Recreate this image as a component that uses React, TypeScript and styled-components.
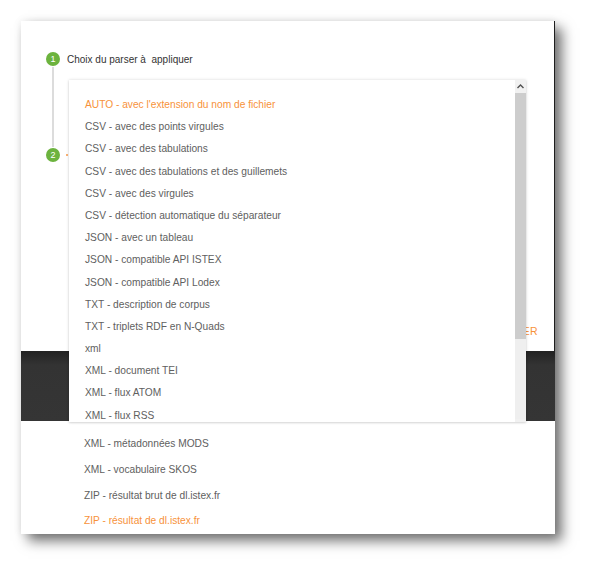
import React from "react";
import styled, { createGlobalStyle } from "styled-components";

const Global = createGlobalStyle`
  html, body { margin: 0; padding: 0; background: #fff; }
  body { font-family: "Liberation Sans", Arial, sans-serif; }
`;

const Page = styled.div`
  width: 597px;
  height: 576px;
  padding: 21px 0 0 21px;
  box-sizing: border-box;
`;

const Frame = styled.div`
  position: relative;
  width: 534px;
  height: 513px;
  background: #fff;
  display: flex;
  flex-direction: column;
  box-shadow: 7px 7px 12px rgba(0, 0, 0, 0.55), 0 0 8px rgba(0, 0, 0, 0.08);
`;

const Dialog = styled.div`
  position: relative;
  height: 331px;
  border-right: 1px solid #1e1e1e;
  box-sizing: border-box;
  padding: 31px 0 0 25px;
`;

const Step = styled.div`
  display: flex;
  align-items: center;
  gap: 7px;
  height: 14px;
`;

const Circle = styled.div`
  width: 14px;
  height: 14px;
  border-radius: 50%;
  background: #6cb33e;
  color: #fff;
  font-size: 9px;
  line-height: 14px;
  text-align: center;
  flex: none;
`;

const StepLabel = styled.span`
  font-size: 10px;
  color: #333;
`;

const ActiveMark = styled.span`
  width: 2px;
  height: 2px;
  margin-left: -1px;
  background: #f7923a;
  opacity: 0.7;
`;

const Connector = styled.div`
  width: 2px;
  height: 80px;
  margin: 1px 0 1px 6px;
  background: #dcdcdc;
`;

const Actions = styled.div`
  position: absolute;
  right: 16px;
  bottom: 14px;
  font-size: 10.5px;
  color: #f7923a;
  letter-spacing: 0.3px;
`;

const Band = styled.div`
  height: 70px;
  background: linear-gradient(#222 0, #333 14px, #353535 100%);
`;

const Lower = styled.div`
  flex: 1;
  padding: 10px 0 0 63px;
`;

const Item = styled.div<{ $active?: boolean }>`
  height: 22.2px;
  line-height: 22.2px;
  font-size: 10.2px;
  white-space: nowrap;
  color: ${(p) => (p.$active ? "#f7923a" : "#606060")};
`;

const LowerItem = styled(Item)`
  height: 25.7px;
  line-height: 25.7px;
`;

const Menu = styled.div`
  position: absolute;
  left: 48px;
  top: 59px;
  width: 457px;
  height: 342px;
  background: #fff;
  box-shadow: 0 0 3px rgba(0, 0, 0, 0.15), 0 1px 2px rgba(0, 0, 0, 0.1);
  display: flex;
  align-items: flex-start;
  overflow: hidden;
`;

const MenuList = styled.div`
  flex: 1;
  padding: 14px 0 0 16px;
`;

const Scrollbar = styled.div`
  width: 11px;
  height: 352px;
  flex: none;
  display: flex;
  flex-direction: column;
  background: #efefef;
`;

const ScrollBtn = styled.div`
  height: 13px;
  flex: none;
  display: flex;
  align-items: center;
  justify-content: center;
  background: #f1f1f1;
`;

const Thumb = styled.div`
  height: 246px;
  flex: none;
  background: #cdcdcd;
`;

const Track = styled.div`
  flex: 1;
`;

const menuItems = [
  "AUTO - avec l'extension du nom de fichier",
  "CSV - avec des points virgules",
  "CSV - avec des tabulations",
  "CSV - avec des tabulations et des guillemets",
  "CSV - avec des virgules",
  "CSV - détection automatique du séparateur",
  "JSON - avec un tableau",
  "JSON - compatible API ISTEX",
  "JSON - compatible API Lodex",
  "TXT - description de corpus",
  "TXT - triplets RDF en N-Quads",
  "xml",
  "XML - document TEI",
  "XML - flux ATOM",
  "XML - flux RSS",
];

const lowerItems = [
  "XML - métadonnées MODS",
  "XML - vocabulaire SKOS",
  "ZIP - résultat brut de dl.istex.fr",
  "ZIP - résultat de dl.istex.fr",
];

export default function App() {
  return (
    <>
      <Global />
      <Page>
        <Frame>
          <Dialog>
            <Step>
              <Circle>1</Circle>
              <StepLabel>Choix du parser à{"\u00a0"} appliquer</StepLabel>
            </Step>
            <Connector />
            <Step>
              <Circle>2</Circle>
              <ActiveMark />
            </Step>
            <Actions>ANNULER</Actions>
          </Dialog>
          <Band />
          <Lower>
            {lowerItems.map((t, i) => (
              <LowerItem key={t} $active={i === lowerItems.length - 1}>
                {t}
              </LowerItem>
            ))}
          </Lower>
          <Menu>
            <MenuList>
              {menuItems.map((t, i) => (
                <Item key={t} $active={i === 0}>
                  {t}
                </Item>
              ))}
            </MenuList>
            <Scrollbar>
              <ScrollBtn>
                <svg width="7" height="5" viewBox="0 0 7 5">
                  <path d="M0.5 4 L3.5 1 L6.5 4" stroke="#505050" strokeWidth="1.4" fill="none" />
                </svg>
              </ScrollBtn>
              <Thumb />
              <Track />
              <ScrollBtn>
                <svg width="7" height="5" viewBox="0 0 7 5">
                  <path d="M0.5 1 L3.5 4 L6.5 1" stroke="#505050" strokeWidth="1.4" fill="none" />
                </svg>
              </ScrollBtn>
            </Scrollbar>
          </Menu>
        </Frame>
      </Page>
    </>
  );
}
